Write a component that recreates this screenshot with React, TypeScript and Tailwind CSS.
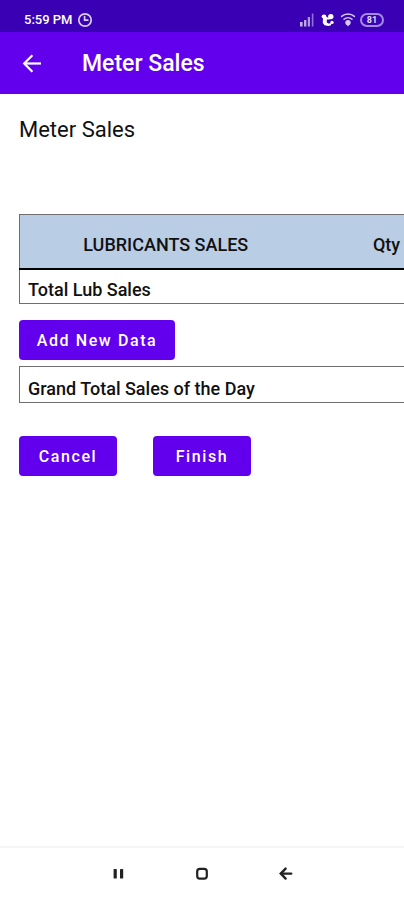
import React from "react";

interface ActionButtonProps {
  label: string;
  className?: string;
}

const ClockIcon = () => (
  <svg
    className="h-4 w-4"
    viewBox="0 0 16 16"
    fill="none"
    stroke="#d9ccf5"
    strokeWidth="1.7"
    strokeLinecap="round"
    aria-hidden="true"
  >
    <circle cx="8" cy="8" r="6.2" />
    <path d="M7.6 4.6V8.2H10.8" />
  </svg>
);

const SignalIcon = () => (
  <svg className="h-4 w-4" viewBox="0 0 16 16" fill="#fff" aria-hidden="true">
    <rect x="1" y="10" width="2.6" height="4.5" opacity="0.7" />
    <rect x="5" y="8" width="2.4" height="6.5" opacity="0.65" />
    <rect x="8.8" y="5" width="2.2" height="9.5" opacity="0.6" />
    <rect x="12.8" y="1.5" width="1.6" height="13" opacity="0.45" />
  </svg>
);

const AppIcon = () => (
  <svg
    className="ml-px h-4 w-4"
    viewBox="0 0 16 16"
    fill="#fff"
    aria-hidden="true"
  >
    <ellipse cx="4" cy="4.4" rx="2.4" ry="1.9" />
    <circle cx="10.8" cy="4.6" r="2.7" />
    <circle cx="12" cy="10.4" r="1.7" />
    <path d="M3 5H6.4L8.4 5.8 10.4 6 9.6 7.6 6.8 7.4V10.4L8.4 11.4 11.4 11.2 11 13.2 8.4 14 4.6 13.2 2.8 11Z" />
  </svg>
);

const WifiIcon = () => (
  <svg
    className="h-4 w-4"
    viewBox="0 0 16 16"
    fill="none"
    stroke="#d6c8f5"
    strokeWidth="1.5"
    strokeLinecap="round"
    aria-hidden="true"
  >
    <path d="M1.6 4.4C5.2 1.2 10.8 1.2 14.4 4.4" />
    <path d="M4 7.2C6.3 5.2 9.7 5.2 12 7.2" />
    <circle cx="8" cy="10.6" r="2.7" fill="#d6c8f5" stroke="none" />
    <path d="M6 11.8H10L8 14.4Z" fill="#d6c8f5" stroke="none" />
  </svg>
);

const BackIcon = () => (
  <svg
    className="h-6 w-6"
    viewBox="0 0 24 24"
    fill="none"
    stroke="currentColor"
    strokeWidth="2.2"
    aria-hidden="true"
  >
    <path d="M21 11.5H4.5" />
    <path d="M12.4 3.2 4.2 11.5 12.4 19.8" />
  </svg>
);

const ActionButton: React.FC<ActionButtonProps> = ({ label, className }) => (
  <button
    type="button"
    className={`h-10 rounded-sm bg-[#6200ee] pt-px text-base font-medium tracking-widest text-white ${className}`}
  >
    {label}
  </button>
);

const StatusBar = () => (
  <div className="flex h-8 items-end justify-between bg-[#3a00b3] pr-5 pl-6 pb-1 text-white">
    <div className="flex items-center gap-1">
      <span className="text-[13px] leading-4 font-medium">5:59 PM</span>
      <ClockIcon />
    </div>
    <div className="flex items-center gap-1">
      <SignalIcon />
      <AppIcon />
      <WifiIcon />
      <span className="flex h-3.5 w-6 items-center justify-center rounded-full border-2 border-[#a48be4] text-[9px] leading-none font-bold text-[#e4dbf8]">
        81
      </span>
    </div>
  </div>
);

const NavigationBar = () => (
  <nav className="flex h-[54px] items-center justify-center gap-15 border-t-2 border-[#f6f6f6] text-[#222]">
    <button type="button" aria-label="Recent apps" className="p-1">
      <svg className="h-4 w-4" viewBox="0 0 16 16" fill="currentColor">
        <rect x="3.6" y="3" width="3.2" height="9.6" rx="0.7" />
        <rect x="10" y="3" width="3.2" height="9.6" rx="0.7" />
      </svg>
    </button>
    <button type="button" aria-label="Home" className="p-1">
      <svg
        className="h-4 w-4"
        viewBox="0 0 16 16"
        fill="none"
        stroke="currentColor"
        strokeWidth="2.2"
      >
        <rect x="3.2" y="2.8" width="9.6" height="9.8" rx="2.6" />
      </svg>
    </button>
    <button type="button" aria-label="Back" className="p-1">
      <svg
        className="h-4 w-4"
        viewBox="0 0 16 16"
        fill="none"
        stroke="currentColor"
        strokeWidth="2.4"
        strokeLinecap="round"
      >
        <path d="M3 7.6H13.2" />
        <path d="M7.6 2.6 2.8 7.6 7.6 12.6" />
      </svg>
    </button>
  </nav>
);

const App = () => {
  return (
    <div className="flex min-h-screen flex-col overflow-hidden bg-white font-[Roboto,sans-serif] text-[#111]">
      <StatusBar />
      <header className="flex h-[62px] items-center gap-[38px] bg-[#6200ee] px-5 pt-0.5 text-white">
        <button type="button" aria-label="Go back">
          <BackIcon />
        </button>
        <h1 className="text-[23px] leading-8 font-medium">Meter Sales</h1>
      </header>

      <main className="flex-1 pl-[19px]">
        <h2 className="mt-5 text-[22px] leading-8">Meter Sales</h2>

        <div className="mt-[68px] overflow-hidden">
          <table className="w-[592px] table-fixed border-collapse border border-[#6f6f6f] text-lg leading-6">
            <thead>
              <tr className="h-[54px] border-b-2 border-black bg-[#b9cde5]">
                <th className="w-[292px] pt-2 font-medium">LUBRICANTS SALES</th>
                <th className="w-[150px] pt-2 font-medium">Qty</th>
                <td className="w-[150px]" />
              </tr>
            </thead>
            <tbody>
              <tr className="h-[35px]">
                <th scope="row" className="pt-2 pl-2 text-left font-medium">
                  Total Lub Sales
                </th>
                <td />
                <td />
              </tr>
            </tbody>
          </table>
        </div>

        <ActionButton label="Add New Data" className="mt-4 block w-[156px]" />

        <div className="mt-[6px] overflow-hidden">
          <table className="w-[592px] table-fixed border-collapse border border-[#6f6f6f] text-lg leading-6">
            <tbody>
              <tr className="h-[36px]">
                <th scope="row" className="w-[292px] pt-2 pl-2 text-left font-medium">
                  Grand Total Sales of the Day
                </th>
                <td />
              </tr>
            </tbody>
          </table>
        </div>

        <div className="mt-[33px] flex gap-9">
          <ActionButton label="Cancel" className="w-[98px]" />
          <ActionButton label="Finish" className="w-[98px]" />
        </div>
      </main>

      <NavigationBar />
    </div>
  );
};

export default App;
